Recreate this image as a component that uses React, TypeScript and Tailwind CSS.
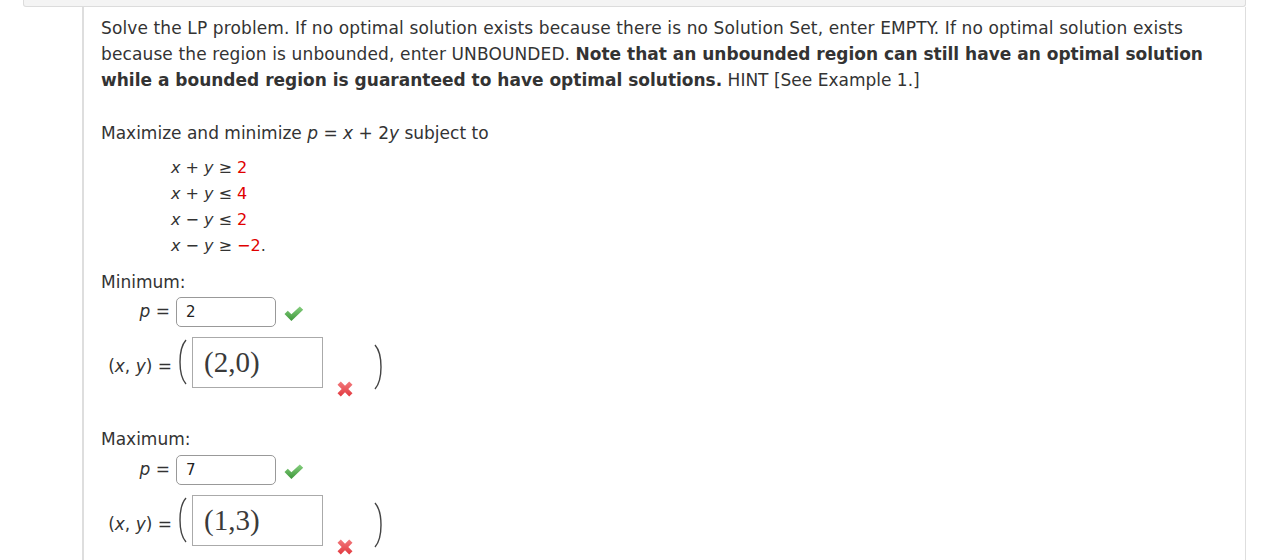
import React from 'react';

const sans = { fontFamily: '"DejaVu Sans", Verdana, sans-serif' };
const serif = { fontFamily: '"Liberation Serif", "DejaVu Serif", serif' };

const Check = () => (
  <svg width="20" height="16" viewBox="0 0 20 16" className="shrink-0">
    <defs>
      <linearGradient id="ck" x1="0" y1="0" x2="0" y2="1">
        <stop offset="0" stopColor="#86cf7f" />
        <stop offset="1" stopColor="#3d9639" />
      </linearGradient>
    </defs>
    <path d="M0.5 8 L3.8 4.8 L7.4 8.2 L15.8 0.5 L19.2 3.8 L7.4 15 Z" fill="url(#ck)" />
  </svg>
);

const Cross = () => (
  <svg width="18" height="18" viewBox="0 0 18 18" className="shrink-0">
    <defs>
      <linearGradient id="cx" x1="0" y1="0" x2="0" y2="1">
        <stop offset="0" stopColor="#f27a7d" />
        <stop offset="1" stopColor="#e2393f" />
      </linearGradient>
    </defs>
    <path
      d="M1.5 4.8 L4.8 1.5 L9 5.7 L13.2 1.5 L16.5 4.8 L12.3 9 L16.5 13.2 L13.2 16.5 L9 12.3 L4.8 16.5 L1.5 13.2 L5.7 9 Z"
      fill="url(#cx)"
    />
  </svg>
);

const Paren = ({ right }: { right?: boolean }) => (
  <svg width="12" height="46" viewBox="0 0 12 46" className="shrink-0">
    <path
      d={right ? 'M2 1 C10 10 10 36 2 45' : 'M10 1 C2 10 2 36 10 45'}
      fill="none"
      stroke="#444"
      strokeWidth="1.4"
    />
  </svg>
);

const Rel = ({ lhs, op, rhs }: { lhs: React.ReactNode; op: string; rhs: string }) => (
  <div className="h-[26px] leading-[26px]">
    {lhs} {op} <span className="text-[#e00000]">{rhs}</span>
  </div>
);

const PRow = ({ value }: { value: string }) => (
  <div className="flex items-center h-[30px]">
    <div className="w-[75px] text-right pr-[6px]">
      <i>p</i> =
    </div>
    <div className="w-[100px] h-[30px] border border-[#999] rounded-[5px] pl-[9px] leading-[28px] text-[15px] text-[#222]">
      {value}
    </div>
    <div className="ml-[8px] mt-[3px]">
      <Check />
    </div>
  </div>
);

const PointRow = ({ value }: { value: string }) => (
  <div className="flex items-start h-[50px]">
    <div className="w-[75px] text-right pr-[4px] leading-[50px] mt-[4px]">
      (<i>x</i>, <i>y</i>) =
    </div>
    <div className="mt-[2px] w-[16px]">
      <Paren />
    </div>
    <div
      style={serif}
      className="w-[131px] h-[51px] border border-[#aaa] pl-[11px] text-[29px] leading-[48px] text-[#3a3a3a]"
    >
      {value}
    </div>
    <div className="ml-[13px] mt-[43px]">
      <Cross />
    </div>
    <div className="ml-[19px] mt-[7px]">
      <Paren right />
    </div>
  </div>
);

export default function App() {
  return (
    <div style={sans} className="w-[1267px] h-[560px] overflow-hidden bg-white text-[#333] text-[17px]">
      <div className="ml-[23px] w-[1223px] h-[7px] bg-[#f4f4f4] border border-t-0 border-[#dcdcdc] rounded-b-[3px]" />
      <div className="ml-[82px] w-[1164px] h-[553px] border-l-2 border-r border-[#dedede] pl-[17px] pt-[8px]">
        <p className="leading-[26px] pr-[28px]">
          <span className="tracking-[0.12px]">
            Solve the LP problem. If no optimal solution exists because there is no Solution Set, enter EMPTY. If no
            optimal solution exists because the region is unbounded, enter UNBOUNDED.
          </span>{' '}
          <b>
            Note that an unbounded region can still have an optimal solution while a bounded region is guaranteed to
            have optimal solutions.
          </b>{' '}
          HINT [See Example 1.]
        </p>

        <p className="leading-[26px] mt-[27px]">
          Maximize and minimize <i>p</i> = <i>x</i> + 2<i>y</i> subject to
        </p>

        <div className="ml-[70px] mt-[9px] text-[16px]">
          <Rel lhs={<><i>x</i> + <i>y</i></>} op="≥" rhs="2" />
          <Rel lhs={<><i>x</i> + <i>y</i></>} op="≤" rhs="4" />
          <Rel lhs={<><i>x</i> − <i>y</i></>} op="≤" rhs="2" />
          <div className="h-[26px] leading-[26px]">
            <i>x</i> − <i>y</i> ≥ <span className="text-[#e00000]">−2</span>.
          </div>
        </div>

        <div className="leading-[26px] mt-[10px]">Minimum:</div>
        <div className="mt-[2px]">
          <PRow value="2" />
        </div>
        <div className="mt-[10px]">
          <PointRow value="(2,0)" />
        </div>

        <div className="leading-[26px] mt-[39px]">Maximum:</div>
        <div className="mt-[3px]">
          <PRow value="7" />
        </div>
        <div className="mt-[10px]">
          <PointRow value="(1,3)" />
        </div>
      </div>
    </div>
  );
}
